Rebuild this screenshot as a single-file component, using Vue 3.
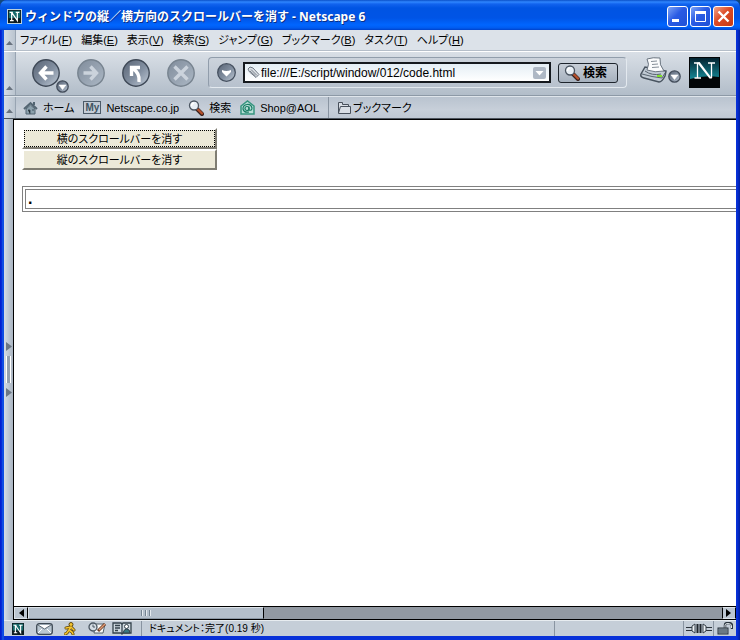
<script setup>
import { ref } from 'vue'

const url = ref('file:///E:/script/window/012/code.html')
const menus = [
  { label: 'ファイル', key: 'F' },
  { label: '編集', key: 'E' },
  { label: '表示', key: 'V' },
  { label: '検索', key: 'S' },
  { label: 'ジャンプ', key: 'G' },
  { label: 'ブックマーク', key: 'B' },
  { label: 'タスク', key: 'T' },
  { label: 'ヘルプ', key: 'H' },
]
const navButtons = [
  { id: 'back', label: '戻る', d: 'M21.500 14H9M14.500 7.500L8.500 14L14.500 20.500', off: false },
  { id: 'forward', label: '進む', d: 'M6.500 14H19M13.500 7.500L19.500 14L13.500 20.500', off: true },
  { id: 'reload', label: '再読み込み', d: 'M17 23C18 16 15 12 10 9M9.500 17V8.500H18', off: false },
  { id: 'stop', label: '中止', d: 'M7.500 7.500L20.500 20.500M20.500 7.500L7.500 20.500', off: true },
]
</script>

<template>
  <div class="window">
    <svg class="defs" width="0" height="0" aria-hidden="true">
      <defs>
        <linearGradient id="orb" x1="0" y1="0" x2="1" y2="1">
          <stop offset="0" stop-color="#586374" />
          <stop offset=".55" stop-color="#8390a1" />
          <stop offset="1" stop-color="#c2ccd8" />
        </linearGradient>
        <linearGradient id="orbOff" x1="0" y1="0" x2="1" y2="1">
          <stop offset="0" stop-color="#808c9b" />
          <stop offset="1" stop-color="#acb8c5" />
        </linearGradient>
        <linearGradient id="sky" x1="0" y1="0" x2="0" y2="1">
          <stop offset="0" stop-color="#03222f" />
          <stop offset="1" stop-color="#148795" />
        </linearGradient>
        <symbol id="lens" viewBox="0 0 16 16">
          <path d="M9 9L14 14" stroke="#38201c" stroke-width="4" stroke-linecap="round" />
          <path d="M10 9.500L14 13.500" stroke="#b6512c" stroke-width="2.400" stroke-linecap="round" />
          <circle cx="6" cy="5.500" r="4.500" fill="#e8eff5" stroke="#4d5763" stroke-width="1.300" />
          <path d="M3.500 6Q3.500 3.500 6 3" fill="none" stroke="#fff" stroke-width="1.500" />
        </symbol>
        <symbol id="drop" viewBox="0 0 13 13">
          <circle cx="6.500" cy="6.500" r="5.700" fill="url(#orb)" stroke="#434d5b" stroke-width="1.300" />
          <path d="M3 5H10L6.500 9.500Z" fill="#fff" stroke="#fff" stroke-width=".6" />
        </symbol>
        <symbol id="en" viewBox="0 0 16 16">
          <rect width="16" height="16" fill="#0d1c20" />
          <rect x="1" y="1" width="14" height="9" fill="#176a6b" />
          <path d="M2 3H6M4.500 3V13M2.500 13H7M4.500 3L11.500 13V3M9.500 3H14" fill="none" stroke="#fff" stroke-width="1.500" />
        </symbol>
      </defs>
    </svg>

    <header class="titlebar">
      <svg class="app-icon" width="15" height="15"><use href="#en" /></svg>
      <h1>ウィンドウの縦／横方向のスクロールバーを消す - Netscape 6</h1>
      <div class="controls">
        <button aria-label="最小化"><svg viewBox="0 0 19 19"><path d="M4 13.500H11" stroke="#fff" stroke-width="3" /></svg></button>
        <button aria-label="最大化"><svg viewBox="0 0 19 19"><path d="M4 5.500H15" stroke="#fff" stroke-width="3" /><path d="M4.500 5V14.500H14.500V5" fill="none" stroke="#fff" /></svg></button>
        <button class="close" aria-label="閉じる"><svg viewBox="0 0 19 19"><path d="M4.500 4.500L14.500 14.500M14.500 4.500L4.500 14.500" stroke="#fff" stroke-width="2.400" /></svg></button>
      </div>
    </header>

    <div class="bar menubar">
      <button class="grip" aria-label="メニューバーを折りたたむ"><svg width="7" height="4"><path d="M0 4L3.500 0L7 4Z" /></svg></button>
      <nav class="menus">
        <button v-for="m in menus" :key="m.key">{{ m.label }}(<u>{{ m.key }}</u>)</button>
      </nav>
    </div>

    <div class="bar navbar">
      <button class="grip" aria-label="ナビゲーションバーを折りたたむ"><svg width="7" height="4"><path d="M0 4L3.500 0L7 4Z" /></svg></button>
      <div class="nav-body">
        <div class="orbs">
          <div v-for="b in navButtons" :key="b.id" class="orb">
            <button :aria-label="b.label" :disabled="b.off">
              <svg width="28" height="28" viewBox="0 0 28 28">
                <circle cx="14" cy="14" r="13.200" :fill="b.off ? 'url(#orbOff)' : 'url(#orb)'" :stroke="b.off ? '#77838f' : '#3f4957'" stroke-width="1.400" />
                <path :d="b.d" fill="none" :stroke="b.off ? '#cbd3dc' : '#fff'" stroke-width="3.400" />
              </svg>
            </button>
            <button v-if="b.id === 'back'" class="history" aria-label="履歴"><svg width="13" height="13"><use href="#drop" /></svg></button>
          </div>
        </div>
        <form class="location" @submit.prevent>
          <button type="button" aria-label="場所の履歴">
            <svg width="19" height="19" viewBox="0 0 19 19"><circle cx="9.500" cy="9.500" r="8.800" fill="url(#orb)" stroke="#465160" stroke-width="1.300" /><path d="M5 7Q9.500 9 14 7V9L9.500 13.500L5 9Z" fill="#fff" /></svg>
          </button>
          <div class="field">
            <svg width="13" height="13" viewBox="0 0 13 13"><path d="M1 3L3 1L6 2L12 8.500L9 11.500L2.500 6Z" fill="#dce1e6" stroke="#707985" /><path d="M4 3.500L10 9.500M3 5L8.500 10" stroke="#747d88" /></svg>
            <input v-model="url" type="text" aria-label="アドレス" />
            <button type="button" aria-label="アドレス一覧"><svg width="13" height="12"><rect width="13" height="12" rx="2" fill="#aeb8c5" /><path d="M2.500 4H10.500L6.500 8.500Z" fill="#fff" /></svg></button>
          </div>
          <button class="search" type="submit"><svg width="16" height="16"><use href="#lens" /></svg>検索</button>
        </form>
        <div class="print">
          <button aria-label="印刷">
            <svg width="28" height="26" viewBox="0 0 28 26">
              <path d="M5 10L1 17Q0 20 4 21L19 25Q22 25 25 19L26 14Z" fill="#c0cad4" stroke="#48535f" stroke-width="1.500" />
              <path d="M2 17Q12 20 22 21L25 16" fill="none" stroke="#596570" />
              <path d="M7 2Q13 0 20 1Q19 8 24 14Q15 16 7 13Q10 7 7 2Z" fill="#fafbfc" stroke="#6b7580" />
              <path d="M11 4.500L17 4M12 7.500L18 7M12 10.500L19 10" stroke="#858e98" />
              <path d="M5 14Q12 19 21 17" fill="none" stroke="#596470" />
              <rect x="17" y="18" width="5" height="2" fill="#7fe02a" />
            </svg>
          </button>
          <button class="print-menu" aria-label="印刷メニュー"><svg width="13" height="13"><use href="#drop" /></svg></button>
        </div>
        <a href="#" class="logo" aria-label="Netscape">
          <svg width="31" height="31" viewBox="0 0 31 31">
            <rect width="31" height="31" fill="#020507" />
            <path d="M1 1H30V20Q15 18 1 22Z" fill="url(#sky)" />
            <path d="M5 6H11M19 6H26M8.500 6V21M5.500 21H12M22.500 6V21" stroke="#fff" stroke-width="1.300" />
            <path d="M8 5.500H11L23 21.500H20.500Z" fill="#fff" />
          </svg>
        </a>
      </div>
    </div>

    <div class="bar linkbar">
      <button class="grip" aria-label="個人用ツールバーを折りたたむ"><svg width="7" height="4"><path d="M0 4L3.500 0L7 4Z" /></svg></button>
      <nav class="links">
        <a href="#">
          <svg width="15" height="14" viewBox="0 0 15 14"><path d="M10 1H12V4H10Z" fill="#536572" /><path d="M1 8L7.500 2L14 8" fill="none" stroke="#536572" stroke-width="2" /><path d="M3 8L7.500 4L12 8V13H3Z" fill="#8ba0ac" stroke="#536572" /><path d="M5 9H7V13M9 9H11" stroke="#435562" /></svg>
          ホーム
        </a>
        <a href="#"><span class="my">My</span>Netscape.co.jp</a>
        <a href="#"><svg width="16" height="16"><use href="#lens" /></svg>検索</a>
        <a href="#">
          <svg width="15" height="15" viewBox="0 0 15 15"><path d="M1 6L7.500 1L14 6V14H1Z" fill="#b9ded7" stroke="#36957f" stroke-width="1.500" /><circle cx="7" cy="8.500" r="2" fill="none" stroke="#197d65" stroke-width="1.200" /><path d="M9 6.500V10Q12 11 12 8Q11 4 7 4.500Q3 5 3 9Q4 13 9 12" fill="none" stroke="#197d65" stroke-width="1.200" /></svg>
          Shop@AOL
        </a>
        <a href="#" class="marks">
          <svg width="15" height="13" viewBox="0 0 15 13"><path d="M1.500 12V1.500H5.500V3.500H11.500V5.500M1.500 12L3.500 5.500H13.500V12.500H1.500Z" fill="#d9dee5" stroke="#48505b" /></svg>
          <span>ブックマーク</span>
        </a>
      </nav>
    </div>

    <div class="middle">
      <button class="sidebar" aria-label="サイドバーを開く">
        <svg width="6" height="9"><path d="M0 0L6 4.500L0 9Z" /></svg>
        <span class="ridge"></span>
        <svg width="6" height="9"><path d="M0 0L6 4.500L0 9Z" /></svg>
      </button>
      <div class="viewport">
        <main class="page">
          <div class="page-buttons">
            <button class="focused">横のスクロールバーを消す</button>
            <button>縦のスクロールバーを消す</button>
          </div>
          <table><tbody><tr><td>.</td></tr></tbody></table>
        </main>
        <div class="scrollbar">
          <button aria-label="左へスクロール"><svg width="6" height="8"><path d="M6 0V8L1 4Z" /></svg></button>
          <div class="track"><div class="thumb"><i></i><i></i><i></i></div></div>
          <button aria-label="右へスクロール"><svg width="6" height="8"><path d="M0 0V8L5 4Z" /></svg></button>
        </div>
      </div>
    </div>

    <footer class="status">
      <div class="tasks">
        <button aria-label="ナビゲータ"><svg width="12" height="12"><use href="#en" /></svg></button>
        <button aria-label="メール"><svg width="17" height="12" viewBox="0 0 17 12"><rect x=".7" y=".7" width="15.600" height="10.600" rx="2.500" fill="#bac7d2" stroke="#3f4a55" stroke-width="1.300" /><path d="M2 2L8.500 6L15 2" fill="#fff" stroke="#5d6974" /><path d="M2 10L6 6M15 10L11 6" stroke="#fff" /></svg></button>
        <button aria-label="インスタントメッセージ"><svg width="12" height="13" viewBox="0 0 12 13"><path d="M7 5L5 8L8 10L9 12M5 8L3 11L1 12M2 6L7 5L10 8" fill="none" stroke="#5d4711" stroke-width="3" stroke-linecap="round" /><circle cx="7" cy="2.500" r="2" fill="#f6c52e" stroke="#5d4711" /><path d="M7 5L5 8L8 10L9 12M5 8L3 11L1 12M2 6L7 5L10 8" fill="none" stroke="#f6c52e" stroke-width="1.600" stroke-linecap="round" /></svg></button>
        <div class="pair">
          <button aria-label="コンポーザ"><svg width="19" height="13" viewBox="0 0 19 13"><path d="M7 2H17L15 11H6Z" fill="#f8f8f8" stroke="#53606b" /><circle cx="5" cy="5" r="4" fill="#d5dde4" stroke="#4b5762" stroke-width="1.300" /><path d="M5 2.500V5H7" fill="none" stroke="#4b5762" /><path d="M10 9L17 2" stroke="#653d28" stroke-width="3" /><path d="M11 8L17 2" stroke="#e29b75" stroke-width="1.400" /></svg></button>
          <button aria-label="アドレス帳"><svg width="20" height="13" viewBox="0 0 20 13"><path d="M1 1H9L10 2L11 1H19V11H11L10 12L9 11H1Z" fill="#ced8df" stroke="#34424c" stroke-width="1.300" /><path d="M3 3.500H8M3 6H8M3 8.500H6M10 2V11" stroke="#34424c" stroke-width="1.300" /><circle cx="14.500" cy="4.500" r="2" fill="#fff" stroke="#34424c" /><path d="M11 11Q12 7 14.500 7Q18 7 18 11Z" fill="#397780" stroke="#34424c" /></svg></button>
        </div>
      </div>
      <p>ドキュメント：完了(0.19 秒)</p>
      <div class="progress"></div>
      <div class="online"><svg width="26" height="11" viewBox="0 0 26 11"><path d="M0 4.500H7M0 7.500H7M19 4.500H26M19 7.500H26" stroke="#2b333b" /><path d="M6 3L9 1V10L6 8ZM20 3L17 1V10L20 8Z" fill="#eef2f5" stroke="#343e48" /><path d="M11.500 1V10M14.500 1V10" stroke="#1e252c" stroke-width="2" /></svg></div>
      <div class="lock"><svg width="16" height="13" viewBox="0 0 16 13"><path d="M8 6V3Q8 1 11 1Q15 1 15 4V7" fill="none" stroke="#28333d" stroke-width="2.500" /><path d="M8 6V3Q8 1.500 11 1.500Q14.500 1.500 14.500 4V6" fill="none" stroke="#dfe5ea" /><rect x="1" y="6" width="10" height="6" fill="#8d9aa5" stroke="#28333d" /><path d="M2 8H10M2 10H10" stroke="#4b5965" /></svg></div>
    </footer>
  </div>
</template>

<style>
body {
  margin: 0;
  background: #12487c;
}
</style>

<style scoped>
* {
  box-sizing: border-box;
}
.window {
  display: flex;
  flex-direction: column;
  min-height: 100vh;
  overflow: hidden;
  padding: 0 4px 4px;
  border-radius: 7px 7px 0 0;
  background: linear-gradient(to right, #0019cf, #0831d9 2px, #166aee 3px, #0831d9 4px, #0831d9 calc(100% - 3px), #001ea0);
  color: #000;
  font-family: "Liberation Sans", "Noto Sans CJK JP", sans-serif;
  font-size: 12px;
  line-height: 16px;
}
.defs {
  position: absolute;
}
button {
  padding: 0;
  border: 0;
  background: none;
  color: inherit;
  font: inherit;
}
svg {
  display: block;
  flex: none;
}
a {
  color: inherit;
  text-decoration: none;
}
.titlebar {
  display: flex;
  align-items: center;
  height: 30px;
  margin: 0 -4px;
  padding: 3px 6px 0 7px;
  gap: 3px;
  background: linear-gradient(#0a50c8 0, #2f86ff 2px, #1263ee 4px, #0054e3 8px, #0054e6 18px, #0066ff 25px, #005bf0 28px, #0041c8 30px);
}
.app-icon {
  border: 1px solid #b9d0dc;
}
.titlebar h1 {
  flex: 1;
  margin: 0;
  color: #fff;
  font-family: "Noto Sans", "Noto Sans CJK JP", sans-serif;
  font-size: 12px;
  font-weight: 700;
  text-shadow: 1px 1px #0b2f86;
  white-space: nowrap;
}
.controls {
  display: flex;
  gap: 2px;
}
.controls button {
  width: 21px;
  height: 21px;
  border: 1px solid #fff;
  border-radius: 3px;
  background: linear-gradient(135deg, #7da4f7, #2a5be4 45%, #1f51d6);
}
.controls .close {
  background: linear-gradient(135deg, #f0a489, #dc4a26 45%, #c63a14);
}
.bar {
  display: flex;
  flex: none;
  border-bottom: 1px solid #8d99a6;
}
.grip {
  display: flex;
  align-items: flex-end;
  justify-content: center;
  width: 12px;
  flex: none;
  padding-bottom: 5px;
  border-right: 1px solid #98a4b2;
  background: linear-gradient(to right, #d5dce5, #bac4cf);
  fill: #68727e;
}
.menubar {
  height: 21px;
  background: #dce2e9;
  border-color: #b5bec9;
}
.menus {
  display: flex;
  align-items: center;
  gap: 9px;
  padding-left: 4px;
  font-size: 11px;
  font-feature-settings: "palt";
  white-space: nowrap;
}
.navbar {
  height: 45px;
  border-top: 1px solid #fff;
  background: linear-gradient(#d9dfe6, #b2bdc9);
}
.nav-body {
  display: flex;
  flex: 1;
  align-items: center;
  min-width: 0;
  padding: 0 16px 2px;
}
.orbs {
  display: flex;
  gap: 17px;
  margin-right: 13px;
}
.orb {
  position: relative;
}
.orb button {
  display: block;
}
.orb .history {
  position: absolute;
  left: 24px;
  top: 21px;
}
.location {
  display: flex;
  flex: 1;
  align-items: center;
  gap: 7px;
  height: 31px;
  min-width: 0;
  padding: 0 8px;
  border: 1px solid #919dab;
  border-right-color: #e3e9ef;
  border-bottom-color: #e3e9ef;
  border-radius: 4px;
  background: linear-gradient(#ccd3dc, #b7c1cd);
}
.field {
  display: flex;
  flex: 1;
  align-items: center;
  gap: 1px;
  height: 21px;
  min-width: 0;
  padding: 0 3px 0 2px;
  border: 2px solid #15191e;
  background: linear-gradient(#e4eef5, #fff);
}
.field input {
  flex: 1;
  min-width: 0;
  padding: 0;
  border: 0;
  outline: 0;
  background: none;
  color: #000;
  font: inherit;
}
.search {
  display: flex;
  align-items: center;
  gap: 3px;
  height: 20px;
  width: 60px;
  padding-left: 5px;
  border: 1px solid #1d242c;
  border-radius: 3px;
  background: linear-gradient(#c7ced7, #a6b1be);
  font-weight: 700;
  white-space: nowrap;
}
.print {
  display: flex;
  align-items: flex-end;
  margin: 0 8px 0 13px;
  padding-bottom: 6px;
}
.linkbar {
  height: 23px;
  border-top: 1px solid #dfe5eb;
  background: linear-gradient(#b9c3cf, #c7cfd9 60%, #bfc8d3);
  border-bottom-color: #4c545d;
}
.links {
  display: flex;
  align-items: center;
  gap: 9px;
  padding-left: 7px;
  white-space: nowrap;
}
.links a {
  display: flex;
  align-items: center;
  gap: 5px;
  font-feature-settings: "palt";
  font-size: 11px;
}
.my {
  padding: 0 1px;
  border: 1px solid #4d5b68;
  color: #405361;
  font-size: 10px;
  font-weight: 700;
  line-height: 11px;
}
.links .marks {
  gap: 1px;
  height: 21px;
  padding-left: 8px;
  border-left: 1px solid #8994a1;
}
.middle {
  display: flex;
  flex: 1;
}
.sidebar {
  display: flex;
  flex-direction: column;
  align-items: center;
  justify-content: center;
  gap: 5px;
  width: 10px;
  flex: none;
  border-right: 1px solid #000;
  background: linear-gradient(to right, #d5dce5, #a9b4c1);
  fill: #6c7784;
}
.ridge {
  width: 5px;
  height: 27px;
  border: 1px solid #fff;
  border-width: 0 1px;
  background: #95a1ae;
}
.viewport {
  display: flex;
  flex: 1;
  flex-direction: column;
  min-width: 0;
}
.page {
  flex: 1;
  overflow: hidden;
  padding: 8px 0 0 8px;
  border-top: 1px solid #000;
  background: #fff;
}
.page-buttons {
  display: flex;
  flex-direction: column;
  align-items: flex-start;
  margin-bottom: 16px;
}
.page-buttons button {
  width: 195px;
  height: 21px;
  border: 2px solid #fff;
  border-right-color: #7f7d73;
  border-bottom-color: #7f7d73;
  background: #ece9d8;
  font-size: 11px;
  line-height: 14px;
  font-feature-settings: "palt";
}
.page-buttons .focused {
  outline: 1px dotted #000;
  outline-offset: -3px;
}
table {
  width: 300%;
  border: 1px solid #808080;
  border-spacing: 2px;
}
td {
  height: 20px;
  padding: 0 2px;
  border: 1px solid #808080;
  font-family: "Liberation Sans", sans-serif;
  font-size: 16px;
  font-weight: 700;
  line-height: 16px;
}
.scrollbar {
  display: flex;
  height: 14px;
  border: solid #000;
  border-width: 1px 0;
  background: #9299a2;
}
.scrollbar button {
  display: flex;
  align-items: center;
  justify-content: center;
  width: 14px;
  border: 1px solid #dce2e8;
  border-right-color: #000;
  background: #bcc6d1;
}
.scrollbar button:last-child {
  border-left-color: #000;
}
.track {
  flex: 1;
}
.thumb {
  display: flex;
  align-items: center;
  justify-content: center;
  gap: 2px;
  width: 34%;
  height: 100%;
  border: 1px solid #dce2e8;
  border-right-color: #000;
  border-bottom-color: #8c98a5;
  background: #b4bfcb;
}
.thumb i {
  width: 2px;
  height: 6px;
  border-left: 1px solid #748391;
  border-right: 1px solid #e5eaef;
}
.status {
  display: flex;
  height: 16px;
  background: #c5ced8;
  border-top: 1px solid #e7ecf0;
}
.tasks {
  display: flex;
  align-items: center;
  justify-content: space-between;
  width: 138px;
  padding: 0 9px 0 8px;
  border-right: 1px solid #8994a1;
}
.pair {
  display: flex;
  gap: 5px;
}
.status p {
  flex: 1;
  margin: 0;
  padding-left: 7px;
  font-size: 10px;
  line-height: 15px;
  font-feature-settings: "palt";
  white-space: nowrap;
}
.progress {
  width: 129px;
  border-left: 1px solid #8994a1;
}
.online,
.lock {
  display: flex;
  align-items: center;
  justify-content: center;
  width: 30px;
  border-left: 1px solid #8994a1;
}
.lock {
  width: 23px;
}
</style>
